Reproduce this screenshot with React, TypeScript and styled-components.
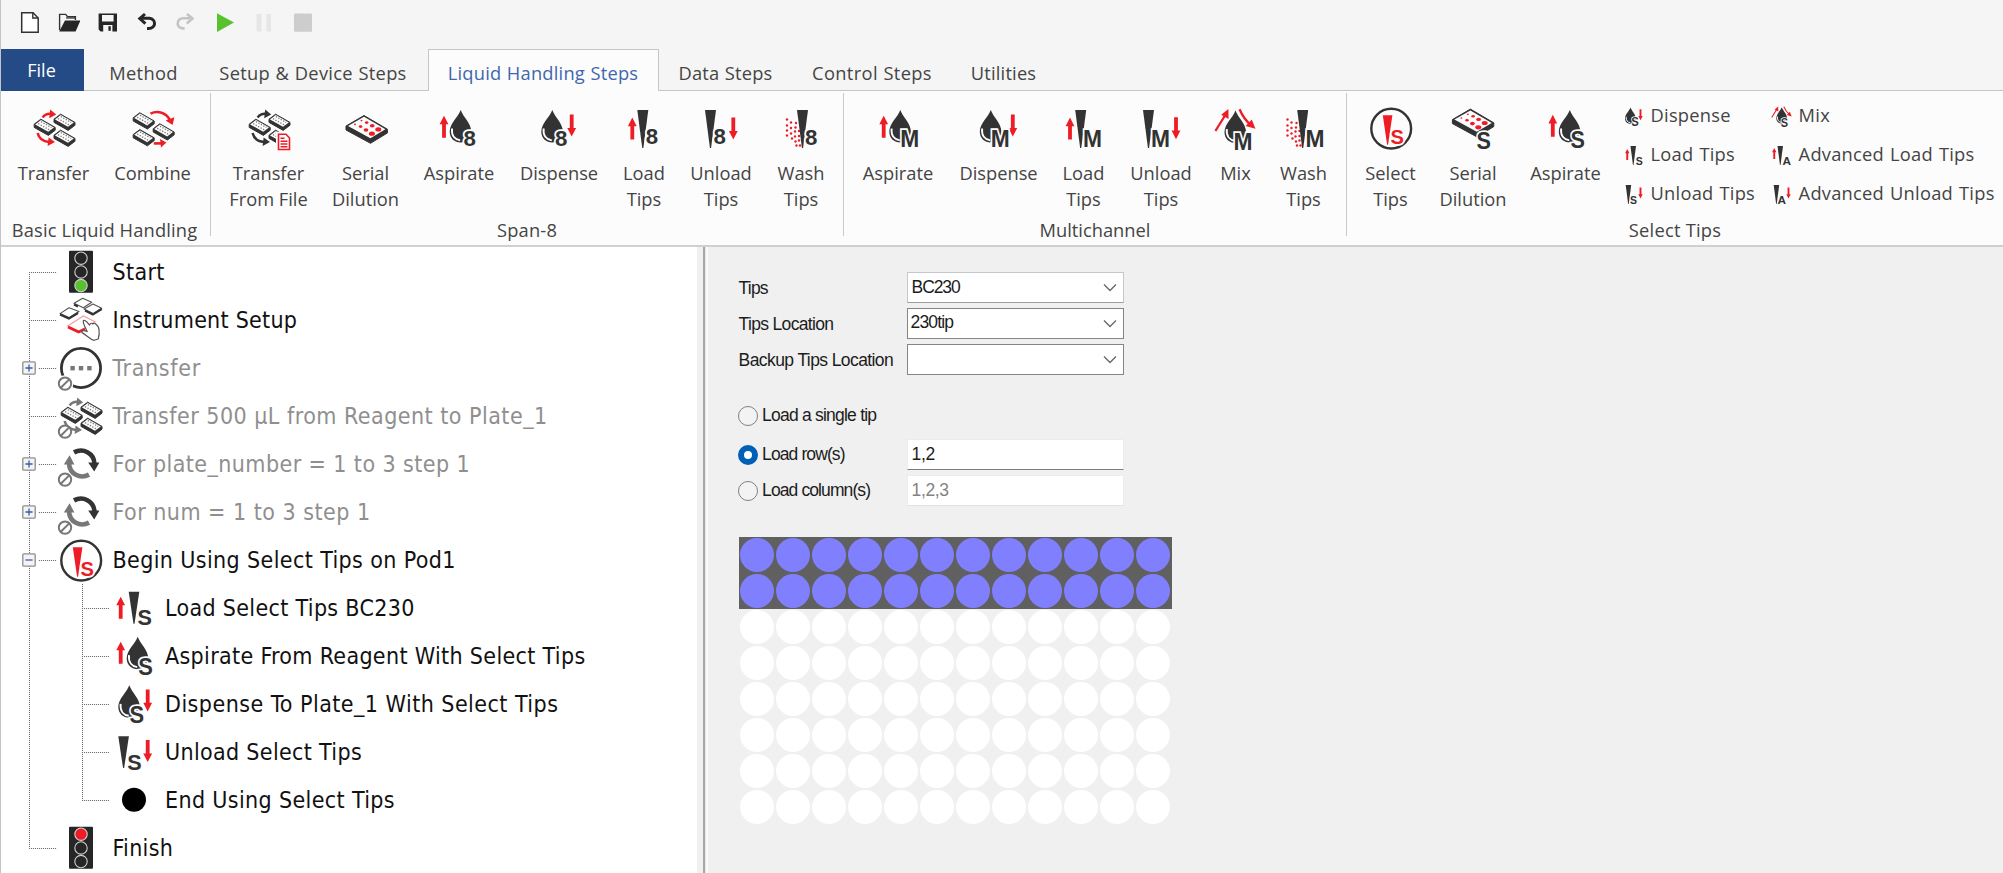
import React from 'react';
import styled, { createGlobalStyle } from 'styled-components';

const INK = '#333333';
const RED = '#ee1c25';

const Global = createGlobalStyle`
  html, body { margin: 0; padding: 0; }
  body { width: 2003px; height: 873px; overflow: hidden; background: #f0f0f0; }
  *, *::before, *::after { box-sizing: border-box; }
`;

/* ---------- page shell ---------- */

const Window = styled.div`
  width: 2003px;
  height: 873px;
  display: flex;
  flex-direction: column;
  border-left: 1px solid #c4c4c4;
  background: #f0f0f0;
  font-family: 'Open Sans', 'Noto Sans', sans-serif;
  color: #444;
`;

const QuickBar = styled.header`
  height: 49px;
  flex: none;
  display: flex;
  align-items: flex-start;
  padding: 10px 0 0 16px;
  gap: 14.7px;
  background: #f5f5f5;
`;

const QuickIcon = styled.svg`
  width: 24px;
  height: 26px;
  display: block;
`;

const TabBar = styled.nav`
  height: 42px;
  flex: none;
  display: flex;
  background: #f5f5f5;
  box-shadow: inset 0 -1px 0 #c6c6c6;
`;

const FileTab = styled.div`
  width: 83px;
  height: 42px;
  background: #254b87;
  color: #fff;
  font-size: 18px;
  line-height: 42px;
  text-align: center;
  padding-right: 2px;
`;

const Tab = styled.div<{ $w: number; $active?: boolean; $ls?: number; $pr?: number }>`
  width: ${(p) => p.$w}px;
  height: 42px;
  flex: none;
  padding-right: ${(p) => p.$pr ?? 0}px;
  text-align: center;
  font-size: 18.3px;
  line-height: 46px;
  white-space: nowrap;
  letter-spacing: ${(p) => p.$ls ?? 0.2}px;
  word-spacing: 0.5px;
  color: ${(p) => (p.$active ? '#3f66ae' : '#444')};
  background: ${(p) => (p.$active ? '#fcfcfc' : 'transparent')};
  border: ${(p) => (p.$active ? '1px solid #c6c6c6' : '1px solid transparent')};
  border-bottom: none;
`;

const Ribbon = styled.section`
  height: 156px;
  flex: none;
  display: flex;
  background: #fcfcfc;
  border-bottom: 2px solid #d0d0d0;
`;

const Group = styled.div<{ $w: number }>`
  width: ${(p) => p.$w}px;
  flex: none;
  display: flex;
  flex-direction: column;
`;

const Divider = styled.div`
  width: 1px;
  height: 143px;
  flex: none;
  margin-top: 2px;
  background: #cacaca;
`;

const GroupItems = styled.div<{ $pad: number }>`
  height: 126px;
  display: flex;
  align-items: flex-start;
  padding: 13px 0 0 ${(p) => p.$pad}px;
`;

const GroupTitle = styled.div<{ $ls?: number; $pr?: number }>`
  text-align: center;
  padding-right: ${(p) => p.$pr ?? 0}px;
  font-size: 18.3px;
  line-height: 26px;
  white-space: nowrap;
  letter-spacing: ${(p) => p.$ls ?? 0}px;
`;

const ItemBox = styled.div<{ $w: number }>`
  width: ${(p) => p.$w}px;
  flex: none;
  display: flex;
  flex-direction: column;
  align-items: center;
`;

const ItemLabel = styled.div`
  margin-top: 8px;
  text-align: center;
  white-space: pre;
  font-size: 18.3px;
  line-height: 25.6px;
`;

const Icon = styled.svg<{ $s?: number }>`
  width: ${(p) => p.$s ?? 48}px;
  height: ${(p) => p.$s ?? 48}px;
  display: block;
  flex: none;
  overflow: visible;
`;

const SmallColumn = styled.div<{ $ml: number }>`
  margin: -8px 0 0 ${(p) => p.$ml}px;
  display: flex;
  flex-direction: column;
`;

const SmallItem = styled.div`
  height: 39px;
  flex: none;
  display: flex;
  align-items: center;
`;

const SmallLabel = styled.span`
  margin-left: 4.5px;
  font-size: 18.3px;
  line-height: 24px;
  padding-bottom: 1px;
  letter-spacing: 0.25px;
  word-spacing: 1px;
  white-space: nowrap;
`;

/* ---------- icon parts ---------- */

const Arrow = ({ x, y, h = 22, down }: { x: number; y: number; h?: number; down?: boolean }) => (
  <path
    fill={RED}
    transform={down ? `translate(${x} ${y + h}) scale(1 -1)` : `translate(${x} ${y})`}
    d={`M0 0L4.4 8.6H1.9V${h}H-1.9V8.6H-4.4Z`}
  />
);

const Drop = ({ x, y = 6 }: { x: number; y?: number }) => (
  <g transform={`translate(${x} ${y})`}>
    <path fill={INK} d="M0 0C2.4 7 10.6 13.4 10.6 21.8C10.6 28.4 6 32.6 0 32.6C-6 32.6 -11 28.4 -11 21.8C-11 13.4 -2.4 7 0 0Z" />
    <path fill="none" stroke="#fff" strokeWidth="1.9" d="M-8.7 18.5C-9.4 26 -5.5 29.8 -0.5 30.4" />
  </g>
);

const Tip = ({ x, y = 6, h = 38, fill = INK, w = 11 }: { x: number; y?: number; h?: number; fill?: string; w?: number }) => (
  <path fill={fill} d={`M${x} ${y}h${w}l-${w * 0.26} ${h * 0.58}l-${w * 0.19} ${h * 0.42}h-${w * 0.1}l-${w * 0.19} -${h * 0.42}Z`} />
);

const Letter = ({ x, y, c, w, fill = INK, size = 22 }: { x: number; y: number; c: string; w: number; fill?: string; size?: number }) => (
  <text
    x={x}
    y={y}
    fill={fill}
    stroke="#fcfcfc"
    strokeWidth="3.5"
    paintOrder="stroke"
    fontFamily="'Liberation Sans', Arial, sans-serif"
    fontWeight="700"
    fontSize={size}
    textLength={w}
    lengthAdjust="spacingAndGlyphs"
  >
    {c}
  </text>
);

const Spray = ({ x }: { x: number }) => (
  <g fill={RED}>
    {[
      [0, 0], [0, 6], [0, 11], [0, 16], [4, 3], [4, 8.5], [4, 14], [5, 19],
      [9, 3.5], [8.5, 8], [8, 12], [8, 17], [8.5, 22], [9.5, 26], [12, 11.5], [12, 16.5], [12, 21], [13, 26],
    ].map(([a, b]) => (
      <circle key={`${a}-${b}`} cx={x + a} cy={15.5 + b} r="1.2" />
    ))}
  </g>
);

const Plate = ({ x, y }: { x: number; y: number }) => (
  <g transform={`translate(${x} ${y})`}>
    <path fill={INK} stroke={INK} strokeWidth="1" strokeLinejoin="round" d="M0.4 0L7 -5L21.4 3.2V6L14.6 11.2L0.4 3.2Z" />
    <path fill="#fdfdfd" d="M1.4 0.2L7.2 -4.2L20.2 3.3L14.4 7.6Z" />
    <path fill="none" stroke="#777" strokeWidth="1.3" strokeDasharray="1.3 1.5" d="M4.4 -0.6L15.3 5.5M7.2 -2.6L17.6 3.3" />
  </g>
);

const PlainPlate = ({ d, edge }: { d: string; edge: string }) => (
  <g fill="#fff" stroke="#555" strokeWidth="1.1" strokeLinejoin="round">
    <path d={d} />
    <path fill="none" stroke={INK} strokeWidth="2.2" d={edge} />
  </g>
);

const DotPlate = () => (
  <g>
    <path fill={INK} stroke={INK} strokeWidth="1" strokeLinejoin="round" d="M4 22L22 11.5L45.4 25.2V29L28.5 39.3L4 26Z" />
    <path fill="#fdfdfd" d="M6 22L22 12.8L43.4 25.3L28.4 34.2Z" />
    <g fill={RED}>
      <ellipse cx="19.5" cy="16.6" rx="1" ry=".8" />
      <ellipse cx="13" cy="20.4" rx="1" ry=".8" />
      <ellipse cx="24.7" cy="18.6" rx="1.8" ry="1.3" />
      <ellipse cx="18.6" cy="22.6" rx="1.8" ry="1.3" />
      <ellipse cx="30.2" cy="21.8" rx="2.4" ry="1.7" />
      <ellipse cx="24" cy="26" rx="2.4" ry="1.8" />
      <ellipse cx="36.3" cy="25.4" rx="3" ry="2.1" />
      <ellipse cx="29.9" cy="29.7" rx="3" ry="2.1" />
    </g>
  </g>
);

const TransferArrows = ({ c }: { c: string }) => (
  <g>
    <path fill="none" stroke={c} strokeWidth="2.4" d="M12.6 13.4C15 10.3 18 9.3 21.5 9.8" />
    <path fill={c} d="M20.2 5.4L26.2 10.6L19.2 14.2Z" />
    <path fill="none" stroke={c} strokeWidth="2.6" d="M7.6 29C9 34.5 13 37.6 19 38" />
    <path fill={c} d="M18.6 33.6L25 38L17.6 42Z" />
  </g>
);

const TransferIcon = ({ c = RED, doc }: { c?: string; doc?: boolean }) => (
  <g>
    <TransferArrows c={c} />
    <Plate x={3.8} y={20.2} />
    <Plate x={23.6} y={15.2} />
    <Plate x={23.6} y={31.2} />
    {doc && (
      <g transform="translate(-1 0)">
        <path fill="#fff" stroke="#fcfcfc" strokeWidth="5" d="M34.5 30.3H42L45.5 34V45.5H34.5Z" />
        <path fill="#fff" stroke={RED} strokeWidth="1.6" d="M34.5 30.3H42L45.5 34V45.5H34.5Z" />
        <path stroke={RED} strokeWidth="1.4" d="M36.5 34.3H40.5M36.5 37.2H43.5M36.5 40H43.5M36.5 42.8H43.5" />
      </g>
    )}
  </g>
);

const CombineIcon = () => (
  <g>
    <path fill="none" stroke={RED} strokeWidth="2.6" d="M21.5 9.6C29 6 37 9 40.6 15.5" />
    <path fill={RED} d="M36.6 16.4L45.4 13.2L43.6 21Z" />
    <path fill="none" stroke={RED} strokeWidth="2.6" d="M24.8 39.4H32" />
    <path fill={RED} d="M31 35L37.4 38.4L32 43.4Z" />
    <Plate x={3.8} y={13.8} />
    <Plate x={23.8} y={24.8} />
    <Plate x={3.8} y={30.6} />
  </g>
);

const SelectTipsIcon = () => (
  <g>
    <circle cx="24.2" cy="24.6" r="19.9" fill="none" stroke={INK} strokeWidth="2.4" />
    <Tip x={15.8} y={11.2} h={29.5} w={9.6} fill={RED} />
    <Letter x={23.6} y={40.4} c="S" w={13.4} size={20} fill={RED} />
  </g>
);

const MixIcon = ({ c }: { c: string }) => (
  <g>
    <Drop x={23.5} y={6.5} />
    <Letter x={21.4} y={46.4} c={c} w={c === 'M' ? 19 : 14.6} size={c === 'M' ? 23 : 24} />
    <g stroke={RED} strokeWidth="2.3" fill="none">
      <path d="M3.4 27L13 11.5" />
      <path d="M27.6 5.2C30 11 34 17 39 21" />
    </g>
    <path fill={RED} d="M16.4 5L16.6 15L9.2 10.8Z" />
    <path fill={RED} d="M43.4 24.8L33.6 22L39.8 15.6Z" />
  </g>
);

const NoSign = () => (
  <g fill="#fff" stroke="#777" strokeWidth="2">
    <circle cx="8" cy="39.6" r="6.2" />
    <path d="M3.8 43.8L12.2 35.4" />
  </g>
);

const LoopIcon = () => (
  <g>
    <path fill="none" stroke={INK} strokeWidth="4.6" d="M17 12.4C26 7.6 37 13 37.4 23.5" />
    <path fill={INK} d="M31.2 22.6H42.4L37.2 31.6Z" />
    <path fill="none" stroke="#777" strokeWidth="4.6" d="M32 34.6C23 39.4 12.6 34 12 23.5" />
    <path fill="#777" d="M6.8 24.6H17.4L12.6 15.2Z" />
    <NoSign />
  </g>
);

const TrafficLight = ({ on }: { on: 'red' | 'green' }) => (
  <g>
    <rect x="12" y="2.7" width="24" height="42" rx="1" fill="#262626" />
    {[10.2, 23.9, 37.6].map((cy, i) => (
      <circle
        key={cy}
        cx="24"
        cy={cy}
        r="6.2"
        fill={on === 'red' && i === 0 ? RED : on === 'green' && i === 2 ? '#58c22e' : '#262626'}
        stroke="#cfcfcf"
        strokeWidth="1.1"
      />
    ))}
  </g>
);

const InstrumentIcon = () => (
  <g>
    <PlainPlate d="M3 17.6L12 11.7L22 15.5L12 21.6Z" edge="M3 18.6L11.8 22.6L21 17" />
    <PlainPlate d="M17 7.3L25.7 2.3L34.7 6.3L26.3 11.8Z" edge="M17 8.4L21 10.4" />
    <PlainPlate d="M27 13L36 8L44.7 12.3L36 17.6Z" edge="M28 14.5L36 18.4L44.7 13" />
    <path fill="#fff" stroke="#f79da1" strokeWidth="1.2" d="M10.7 30L26.3 20L38 25.7L22 35.4Z" />
    <path fill="none" stroke={RED} strokeWidth="2.8" d="M11 31L21.6 36L28 33" />
    <path
      fill="#fff"
      stroke="#555"
      strokeWidth="1.2"
      strokeLinejoin="round"
      d="M26.4 24.5C28.5 23.4 30 26 32.6 29.2C33 26.6 35 27 35.8 28C37 26.6 38.8 27.4 39.4 28.8C42.4 30.4 43 37 41.2 43L37.2 44.3C33 43.6 30.6 39.6 25 36.6C24.4 34.4 27 33.8 30.2 35.6C28.6 31.4 25.4 27.4 26.4 24.5Z"
    />
  </g>
);

/* ---------- ribbon data ---------- */

type RibbonItem = { w: number; label: string; icon: React.ReactNode };

const basicItems: RibbonItem[] = [
  { w: 95, label: 'Transfer', icon: <TransferIcon /> },
  { w: 103, label: 'Combine', icon: <CombineIcon /> },
];

const spanItems: RibbonItem[] = [
  { w: 103, label: 'Transfer\nFrom File', icon: <TransferIcon c={INK} doc /> },
  { w: 91, label: 'Serial\nDilution', icon: <DotPlate /> },
  { w: 96, label: 'Aspirate', icon: <><Drop x={25.7} /><Arrow x={9} y={11.7} /><Letter x={28.6} y={41.6} c="8" w={12.4} /></> },
  { w: 104, label: 'Dispense', icon: <><Drop x={17.3} /><Arrow x={36.7} y={10.6} down /><Letter x={20} y={41.6} c="8" w={12.4} /></> },
  { w: 66, label: 'Load\nTips', icon: <><Arrow x={12.3} y={13.6} /><Tip x={17.3} /><Letter x={25.8} y={40} c="8" w={12.4} /></> },
  { w: 88, label: 'Unload\nTips', icon: <><Arrow x={36.3} y={13.6} down /><Tip x={8} /><Letter x={16.4} y={40} c="8" w={12.4} /></> },
  { w: 72, label: 'Wash\nTips', icon: <><Spray x={10} /><Tip x={20} /><Letter x={28} y={40.6} c="8" w={12.4} /></> },
];

const multiItems: RibbonItem[] = [
  { w: 100, label: 'Aspirate', icon: <><Drop x={26.3} /><Arrow x={9.7} y={11.7} /><Letter x={26.2} y={43} c="M" w={19} size={23} /></> },
  { w: 101, label: 'Dispense', icon: <><Drop x={15.8} /><Arrow x={37.8} y={10.6} down /><Letter x={15.7} y={43} c="M" w={19} size={23} /></> },
  { w: 69, label: 'Load\nTips', icon: <><Arrow x={10} y={13.6} /><Tip x={15.2} /><Letter x={23} y={43} c="M" w={19} size={23} /></> },
  { w: 86, label: 'Unload\nTips', icon: <><Arrow x={39} y={13.2} down /><Tip x={6} /><Letter x={13.9} y={43} c="M" w={19} size={23} /></> },
  { w: 63, label: 'Mix', icon: <MixIcon c="M" /> },
  { w: 73, label: 'Wash\nTips', icon: <><Spray x={7.5} /><Tip x={17.2} /><Letter x={25.4} y={43} c="M" w={19} size={23} /></> },
];

const selectItems: RibbonItem[] = [
  { w: 77, label: 'Select\nTips', icon: <SelectTipsIcon /> },
  { w: 88, label: 'Serial\nDilution', icon: <><g transform="translate(-.6 -6.4)"><DotPlate /></g><Letter x={27.4} y={44.6} c="S" w={14.4} size={24} /></> },
  { w: 97, label: 'Aspirate', icon: <><Drop x={27.8} /><Arrow x={10.8} y={10.8} /><Letter x={28.4} y={44} c="S" w={14.4} size={24} /></> },
];

const smallLeft: [string, React.ReactNode][] = [
  ['Dispense', <><Drop x={17} y={7} /><Arrow x={37} y={10.6} down /><Letter x={18.6} y={44} c="S" w={15} size={25} /></>],
  ['Load Tips', <><Arrow x={10.5} y={12} /><Tip x={17} /><Letter x={27.6} y={43} c="S" w={14} size={23} /></>],
  ['Unload Tips', <><Arrow x={37} y={11} down /><Tip x={7.4} /><Letter x={16} y={43} c="S" w={14} size={23} /></>],
];

const smallRight: [string, React.ReactNode][] = [
  ['Mix', <MixIcon c="S" />],
  ['Advanced Load Tips', <><Arrow x={8.5} y={10} /><Tip x={15} /><Letter x={25} y={43} c="A" w={17} size={23} /></>],
  ['Advanced Unload Tips', <><Arrow x={37} y={11} down /><Tip x={7.4} /><Letter x={15} y={43} c="A" w={17} size={23} /></>],
];

const RibbonItems = ({ items }: { items: RibbonItem[] }) => (
  <>
    {items.map((it, i) => (
      <ItemBox key={i} $w={it.w}>
        <Icon viewBox="0 0 48 48">{it.icon}</Icon>
        <ItemLabel>{it.label}</ItemLabel>
      </ItemBox>
    ))}
  </>
);

const SmallItems = ({ items, ml }: { items: [string, React.ReactNode][]; ml: number }) => (
  <SmallColumn $ml={ml}>
    {items.map(([label, icon]) => (
      <SmallItem key={label}>
        <Icon $s={24} viewBox="0 0 48 48">{icon}</Icon>
        <SmallLabel>{label}</SmallLabel>
      </SmallItem>
    ))}
  </SmallColumn>
);

/* ---------- method tree ---------- */

const Body = styled.main`
  flex: 1;
  display: flex;
  min-height: 0;
`;

const TreePane = styled.section`
  width: 696px;
  flex: none;
  padding-top: 1px;
  background: #fff;
  font-family: 'DejaVu Sans Condensed', 'DejaVu Sans', Tahoma, sans-serif;
`;

const Splitter = styled.div`
  width: 11px;
  flex: none;
  background: linear-gradient(90deg, #f0f0f0 0 6px, #a8a8a8 6px 8px, #e6e6e6 8px 9px, #fafafa 9px 11px);
`;

const TreeRow = styled.div`
  height: 48px;
  display: flex;
  align-items: center;
`;

const dotsV = 'repeating-linear-gradient(180deg, #707070 0 1px, #f0f0f0 1px 2px)';
const dotsH = 'repeating-linear-gradient(90deg, #707070 0 1px, #f0f0f0 1px 2px)';

const Gutter = styled.div<{ $w: number; $x: number; $kind: 'first' | 'mid' | 'last' | 'pass' }>`
  width: ${(p) => p.$w}px;
  height: 48px;
  flex: none;
  display: flex;
  align-items: center;
  padding-left: 21px;
  background-repeat: no-repeat;
  background-image: ${dotsV}, ${dotsH};
  background-size:
    1px ${(p) => (p.$kind === 'first' || p.$kind === 'last' ? 24 : 48)}px,
    ${(p) => (p.$kind === 'pass' ? 0 : p.$w - p.$x)}px 1px;
  background-position:
    ${(p) => p.$x}px ${(p) => (p.$kind === 'first' ? 24 : 0)}px,
    ${(p) => p.$x}px 24px;
`;

const Expander = styled.svg`
  width: 14px;
  height: 14px;
  display: block;
  box-shadow: 2px 0 0 #fff;
`;

const TreeLabel = styled.span<{ $off?: boolean; $ls?: number }>`
  margin-left: 7.5px;
  font-size: 23px;
  line-height: 28px;
  letter-spacing: ${(p) => p.$ls ?? 0.33}px;
  white-space: nowrap;
  color: ${(p) => (p.$off ? '#8f8f8f' : '#111')};
`;

type Step = {
  label: string;
  icon: React.ReactNode;
  off?: boolean;
  sign?: '+' | '-';
  kind?: 'first' | 'last';
  child?: 'mid' | 'last';
  ls?: number;
};

const steps: Step[] = [
  { label: 'Start', icon: <TrafficLight on="green" />, kind: 'first' },
  { label: 'Instrument Setup', icon: <InstrumentIcon />, ls: 0.25 },
  {
    label: 'Transfer',
    off: true,
    sign: '+',
    ls: 0.7,
    icon: (
      <>
        <circle cx="24" cy="24" r="19.6" fill="#fff" stroke={INK} strokeWidth="2.8" />
        <g fill="#777">
          <rect x="13.4" y="22" width="4.4" height="4.4" />
          <rect x="21.8" y="22" width="4.4" height="4.4" />
          <rect x="30.2" y="22" width="4.4" height="4.4" />
        </g>
        <circle cx="8" cy="39.6" r="8.4" fill="#fff" />
        <NoSign />
      </>
    ),
  },
  { label: 'Transfer 500 µL from Reagent to Plate_1', off: true, ls: 0.48, icon: <><TransferIcon c="#777" /><NoSign /></> },
  { label: 'For plate_number = 1 to 3 step 1', off: true, sign: '+', ls: 0.42, icon: <LoopIcon /> },
  { label: 'For num = 1 to 3 step 1', off: true, sign: '+', ls: 0.48, icon: <LoopIcon /> },
  { label: 'Begin Using Select Tips on Pod1', sign: '-', ls: 0.38, icon: <SelectTipsIcon /> },
  { label: 'Load Select Tips BC230', child: 'mid', icon: <><Arrow x={10.7} y={12.7} /><Tip x={18.7} y={7.7} h={32} w={10.6} /><Letter x={27.4} y={41.4} c="S" w={14.4} /></> },
  { label: 'Aspirate From Reagent With Select Tips', child: 'mid', icon: <><Drop x={27.7} y={4.7} /><Arrow x={10.7} y={9.7} /><Letter x={28.2} y={42.6} c="S" w={14.6} size={23} /></> },
  { label: 'Dispense To Plate_1 With Select Tips', child: 'mid', ls: 0.46, icon: <><Drop x={19.3} y={5.3} /><Arrow x={37.7} y={9.4} down /><Letter x={19.5} y={42.8} c="S" w={14.6} size={23} /></> },
  { label: 'Unload Select Tips', child: 'mid', icon: <><Arrow x={37.7} y={12} down /><Tip x={8.3} y={8.3} h={31.6} w={10.6} /><Letter x={17.2} y={41.6} c="S" w={14.4} /></> },
  { label: 'End Using Select Tips', child: 'last', ls: 0.36, icon: <circle cx="24" cy="23.7" r="12" fill="#000" /> },
  { label: 'Finish', icon: <TrafficLight on="red" />, kind: 'last' },
];

/* ---------- configuration form ---------- */

const FormPane = styled.section`
  flex: 1;
  display: flex;
  flex-direction: column;
  padding: 25px 0 0 30.6px;
  font-family: 'Liberation Sans', Arial, sans-serif;
  font-size: 17.5px;
  letter-spacing: -0.8px;
  color: #1c1c1c;
`;

const FormRow = styled.div<{ $mt?: number }>`
  height: 31px;
  margin-top: ${(p) => p.$mt ?? 5}px;
  display: flex;
  align-items: center;
`;

const FieldLabel = styled.label<{ $ls?: number }>`
  width: 168px;
  flex: none;
  display: flex;
  align-items: center;
  white-space: nowrap;
  padding-top: 2px;
  letter-spacing: ${(p) => p.$ls ?? -0.8}px;
`;

const Combo = styled.div<{ $soft?: boolean; $pad: number; $ls: number }>`
  width: 217px;
  height: 31px;
  display: flex;
  align-items: center;
  justify-content: space-between;
  padding: 0 6px 0 ${(p) => p.$pad}px;
  letter-spacing: ${(p) => p.$ls}px;
  background: #fff;
  border: ${(p) => (p.$soft ? '1px solid #c3c8cd' : '1.4px solid #858585')};
  border-bottom-color: ${(p) => (p.$soft ? '#9e9e9e' : '#858585')};
`;

const ComboText = styled.span<{ $up?: number }>`
  padding-bottom: ${(p) => p.$up ?? 0}px;
`;

const Chevron = styled.svg`
  width: 14px;
  height: 9px;
  display: block;
`;

const TextBox = styled.div<{ $muted?: boolean }>`
  width: 217px;
  height: 31px;
  margin-top: 2px;
  display: flex;
  align-items: center;
  padding-left: 4px;
  letter-spacing: -0.4px;
  background: #fff;
  color: ${(p) => (p.$muted ? '#838383' : '#1c1c1c')};
  border: 1px solid #ececec;
  border-bottom: ${(p) => (p.$muted ? '1px solid #e2e2e2' : '1.4px solid #7c7c7c')};
`;

const Radio = styled.span<{ $on?: boolean }>`
  width: 20px;
  height: 20px;
  flex: none;
  margin: 0 4.5px 0 -1px;
  border-radius: 50%;
  background: ${(p) => (p.$on ? '#fff' : '#f3f3f3')};
  border: ${(p) => (p.$on ? '6px solid #005fb8' : '1.4px solid #808080')};
`;

const WellGrid = styled.div`
  width: 433px;
  margin-top: 32px;
  display: flex;
  flex-direction: column;
`;

const WellRow = styled.div<{ $on: boolean }>`
  height: 36px;
  display: flex;
  gap: 2px;
  padding: 0.5px 0 0 1px;
  background: ${(p) => (p.$on ? '#606060' : 'transparent')};
`;

const Well = styled.span<{ $on: boolean }>`
  width: 34px;
  height: 34px;
  flex: none;
  border-radius: 50%;
  background: ${(p) => (p.$on ? '#8080ff' : '#fff')};
`;

const Down = () => (
  <Chevron viewBox="0 0 14 9">
    <path d="M1 1.5L7 7.5L13 1.5" fill="none" stroke="#6a6a6a" strokeWidth="1.4" />
  </Chevron>
);

export default function App() {
  return (
    <Window>
      <Global />
      <QuickBar>
        <QuickIcon viewBox="0 0 24 26">
          <path d="M4.7 2.7H16L21.2 8V22.3H4.7Z" fill="#fff" stroke="#333" strokeWidth="1.5" />
          <path d="M15.8 2.7V8H21.2" fill="none" stroke="#333" strokeWidth="1.4" />
        </QuickIcon>
        <QuickIcon viewBox="0 0 24 26">
          <path d="M3.6 20V4.4H9.6L11.6 6.8H19.4V10" fill="none" stroke="#333" strokeWidth="1.4" />
          <path d="M3.2 21.4L9 10.6H24.4L19.6 21.4Z" fill="#262626" />
          <path d="M10 8H19" stroke="#333" strokeWidth="1.2" />
        </QuickIcon>
        <QuickIcon viewBox="0 0 24 26">
          <path fillRule="evenodd" fill="#262626" d="M4.6 3.6H23V21.6H6.6L4.6 19.6ZM8 5V11.6H19.6V5ZM9.2 15V21.6H18.4V15Z" />
          <rect x="14.4" y="16.2" width="2.4" height="4.6" fill="#262626" />
        </QuickIcon>
        <QuickIcon viewBox="0 0 24 26">
          <path d="M8 8.2H16.4C23.4 9 23.4 18.4 15.6 18.4H14" fill="none" stroke="#262626" strokeWidth="3" />
          <path d="M12 4L6.8 8.6L12.4 13.6" fill="none" stroke="#262626" strokeWidth="3" />
        </QuickIcon>
        <QuickIcon viewBox="0 0 24 26">
          <path d="M18.6 8.2H10.6C4 9 4 18.4 11.2 18.4H12.6" fill="none" stroke="#c4c4c4" strokeWidth="2.6" />
          <path d="M15 4L20.4 8.6L14.8 13.4" fill="none" stroke="#c4c4c4" strokeWidth="2.6" />
        </QuickIcon>
        <QuickIcon viewBox="0 0 24 26">
          <path d="M7 3.2L24 12.6L7 22Z" fill="#58c22e" />
        </QuickIcon>
        <QuickIcon viewBox="0 0 24 26">
          <path d="M7.6 4H12.4V21.6H7.6ZM17.4 4H22V21.6H17.4Z" fill="#e6e6e6" />
        </QuickIcon>
        <QuickIcon viewBox="0 0 24 26">
          <rect x="6" y="3.6" width="18" height="18.2" rx="1" fill="#cdcdcd" />
        </QuickIcon>
      </QuickBar>

      <TabBar>
        <FileTab>File</FileTab>
        <Tab $w={119} $ls={0.35}>Method</Tab>
        <Tab $w={225} $ls={0.3} $pr={5}>Setup &amp; Device Steps</Tab>
        <Tab $w={231} $active $ls={0.22} $pr={1}>Liquid Handling Steps</Tab>
        <Tab $w={133}>Data Steps</Tab>
        <Tab $w={160} $ls={0.35}>Control Steps</Tab>
        <Tab $w={103}>Utilities</Tab>
      </TabBar>

      <Ribbon>
        <Group $w={209}>
          <GroupItems $pad={5}>
            <RibbonItems items={basicItems} />
          </GroupItems>
          <GroupTitle $ls={0.15} $pr={2}>Basic Liquid Handling</GroupTitle>
        </Group>
        <Divider />
        <Group $w={632}>
          <GroupItems $pad={6}>
            <RibbonItems items={spanItems} />
          </GroupItems>
          <GroupTitle $ls={0.2}>Span-8</GroupTitle>
        </Group>
        <Divider />
        <Group $w={502}>
          <GroupItems $pad={4}>
            <RibbonItems items={multiItems} />
          </GroupItems>
          <GroupTitle>Multichannel</GroupTitle>
        </Group>
        <Divider />
        <Group $w={656}>
          <GroupItems $pad={5}>
            <RibbonItems items={selectItems} />
            <SmallItems items={smallLeft} ml={8} />
            <SmallItems items={smallRight} ml={15} />
          </GroupItems>
          <GroupTitle $ls={0.25}>Select Tips</GroupTitle>
        </Group>
      </Ribbon>

      <Body>
        <TreePane>
          {steps.map((s) => (
            <TreeRow key={s.label}>
              <Gutter $w={56} $x={28} $kind={s.child ? 'pass' : s.kind ?? 'mid'}>
                {s.sign && (
                  <Expander viewBox="0 0 14 14">
                    <rect x=".8" y=".8" width="12.4" height="12.4" rx="1" fill="#f4f4f4" stroke="#8e8e8e" strokeWidth="1.3" />
                    <path d={s.sign === '+' ? 'M3.4 7H10.6M7 3.4V10.6' : 'M3.4 7H10.6'} stroke="#3c5bb0" strokeWidth="1.3" />
                  </Expander>
                )}
              </Gutter>
              {s.child && <Gutter $w={52.5} $x={25} $kind={s.child} />}
              <Icon viewBox="0 0 48 48">{s.icon}</Icon>
              <TreeLabel $off={s.off} $ls={s.ls}>{s.label}</TreeLabel>
            </TreeRow>
          ))}
        </TreePane>
        <Splitter />
        <FormPane>
          <FormRow $mt={0}>
            <FieldLabel>Tips</FieldLabel>
            <Combo $soft $pad={4} $ls={-1.1}><ComboText>BC230</ComboText><Down /></Combo>
          </FormRow>
          <FormRow>
            <FieldLabel $ls={-0.67}>Tips Location</FieldLabel>
            <Combo $pad={3} $ls={-0.85}><ComboText $up={2}>230tip</ComboText><Down /></Combo>
          </FormRow>
          <FormRow>
            <FieldLabel $ls={-0.59}>Backup Tips Location</FieldLabel>
            <Combo $pad={3} $ls={0}><ComboText /><Down /></Combo>
          </FormRow>
          <FormRow $mt={24}>
            <FieldLabel $ls={-0.78}><Radio />Load a single tip</FieldLabel>
          </FormRow>
          <FormRow $mt={8}>
            <FieldLabel $ls={-0.9}><Radio $on />Load row(s)</FieldLabel>
            <TextBox>1,2</TextBox>
          </FormRow>
          <FormRow>
            <FieldLabel $ls={-0.9}><Radio />Load column(s)</FieldLabel>
            <TextBox $muted>1,2,3</TextBox>
          </FormRow>
          <WellGrid>
            {Array.from({ length: 8 }, (_, r) => (
              <WellRow key={r} $on={r < 2}>
                {Array.from({ length: 12 }, (_, c) => (
                  <Well key={c} $on={r < 2} />
                ))}
              </WellRow>
            ))}
          </WellGrid>
        </FormPane>
      </Body>
    </Window>
  );
}
